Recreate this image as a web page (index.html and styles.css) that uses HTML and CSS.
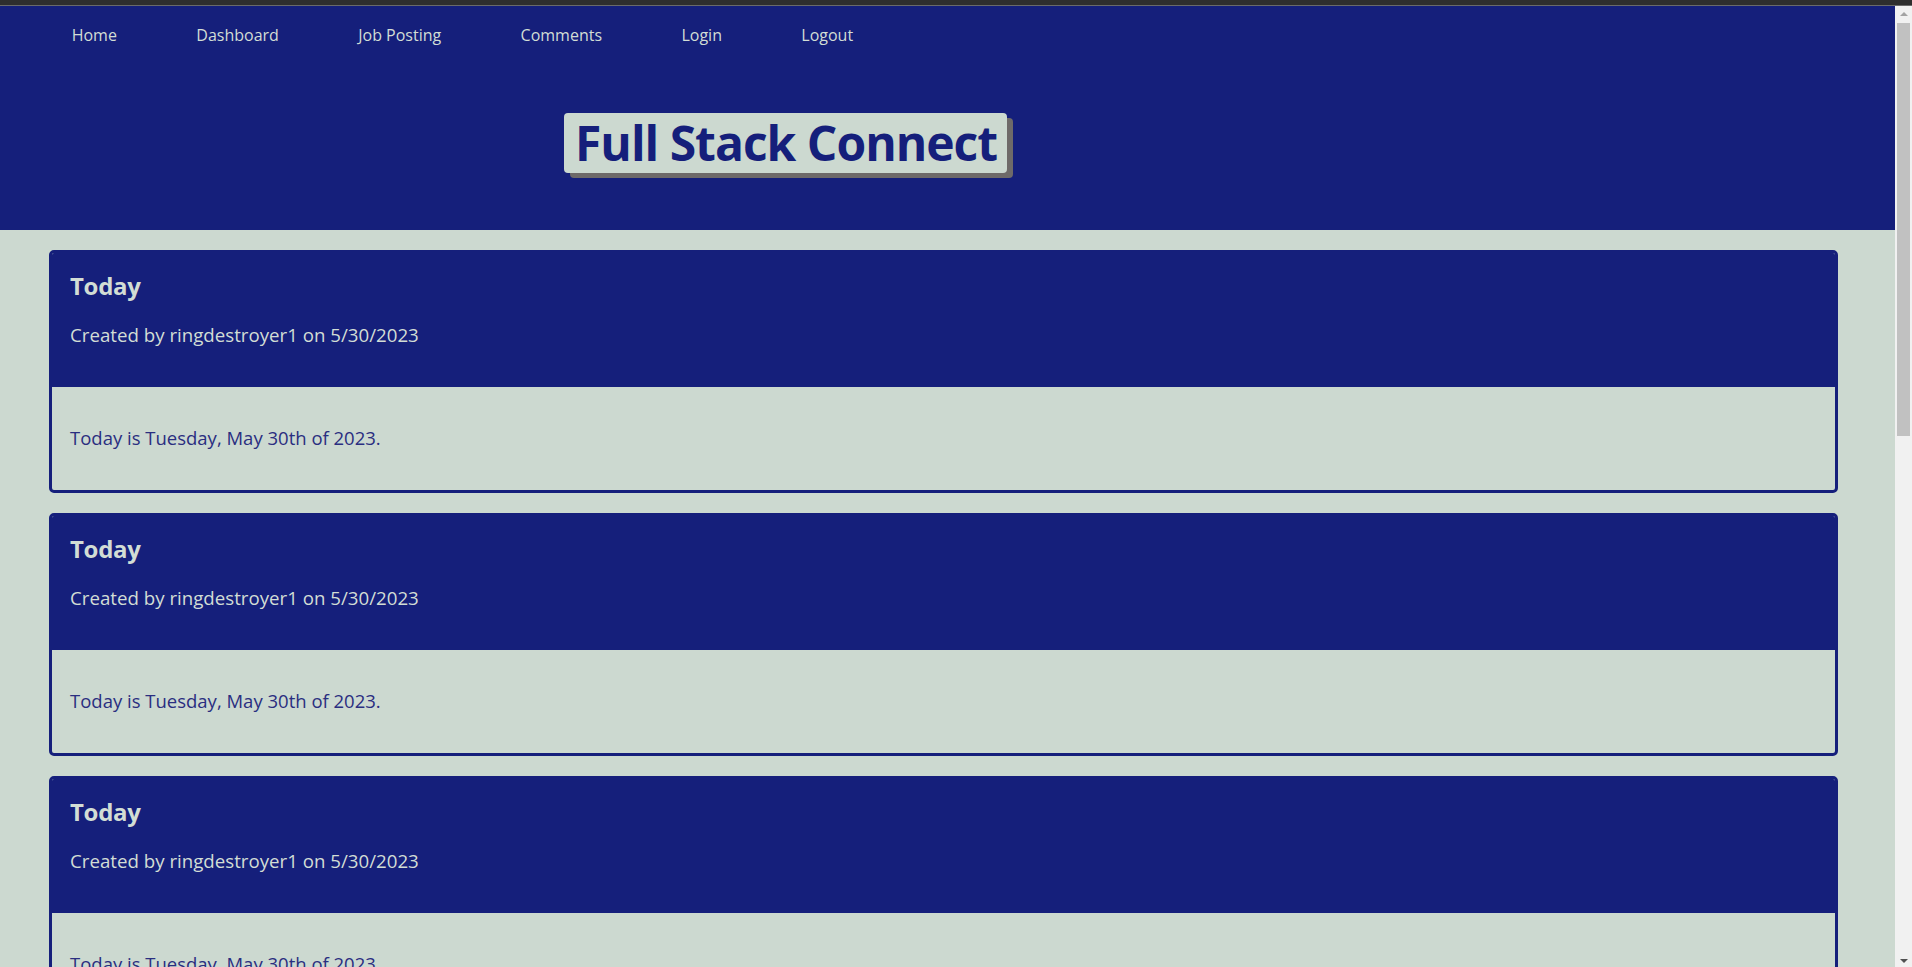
FILE: index.html
```html
<!DOCTYPE html>
<html lang="en">
<head>
<meta charset="utf-8">
<title>Full Stack Connect</title>
<link rel="stylesheet" href="styles.css">
</head>
<body>
<div class="chrome"></div>
<header class="site-header">
  <nav class="nav">
    <a class="nav-link" href="#">Home</a>
    <a class="nav-link" href="#">Dashboard</a>
    <a class="nav-link" href="#">Job Posting</a>
    <a class="nav-link" href="#">Comments</a>
    <a class="nav-link" href="#">Login</a>
    <a class="nav-link" href="#">Logout</a>
  </nav>
  <div class="brand"><h1 class="brand-title">Full Stack Connect</h1></div>
</header>
<main class="feed">
  <article class="post">
    <div class="post-head">
      <h2 class="post-title">Today</h2>
      <p class="post-meta">Created by ringdestroyer1 on 5/30/2023</p>
    </div>
    <div class="post-body"><p class="post-text">Today is Tuesday, May 30th of 2023.</p></div>
  </article>
  <article class="post">
    <div class="post-head">
      <h2 class="post-title">Today</h2>
      <p class="post-meta">Created by ringdestroyer1 on 5/30/2023</p>
    </div>
    <div class="post-body"><p class="post-text">Today is Tuesday, May 30th of 2023.</p></div>
  </article>
  <article class="post">
    <div class="post-head">
      <h2 class="post-title">Today</h2>
      <p class="post-meta">Created by ringdestroyer1 on 5/30/2023</p>
    </div>
    <div class="post-body"><p class="post-text">Today is Tuesday, May 30th of 2023.</p></div>
  </article>
</main>
<div class="scrollbar">
  <div class="scroll-arrow up"></div>
  <div class="scroll-thumb"></div>
  <div class="scroll-arrow down"></div>
</div>
</body>
</html>
```
FILE: styles.css
```css
html, body {
  margin: 0;
  padding: 0;
}
body {
  background: #ccd9d0;
  font-family: "Open Sans", "Noto Sans", sans-serif;
}
.chrome {
  height: 5px;
  background: #2e2e2e;
  border-bottom: 1px solid #6a6a6a;
}
.site-header {
  background: #151f7b;
  height: 224px;
  box-sizing: border-box;
  padding-top: 17px;
}
.nav {
  display: flex;
  padding-left: 32px;
}
.nav-link {
  color: #d2ddd5;
  text-decoration: none;
  font-size: 16px;
  line-height: 24px;
  padding: 0 39.7px;
}
.brand {
  margin-top: 66px;
  padding-left: 564px;
}
.brand-title {
  display: inline-block;
  margin: 0;
  background: #ccd9d0;
  color: #151f7b;
  font-size: 48px;
  letter-spacing: -1px;
  font-weight: 700;
  line-height: 60px;
  padding: 0 10px 0 11px;
  border-radius: 4px;
  box-shadow: 6px 5px 0 #6e6a69;
}
.feed {
  padding: 20px 74px 20px 49px;
  display: flex;
  flex-direction: column;
  gap: 20px;
}
.post {
  border: 3px solid #151f7b;
  border-radius: 5px;
  overflow: hidden;
}
.post-head {
  background: #151f7b;
  height: 134px;
  box-sizing: border-box;
  padding: 17px 18px 0;
  color: #d2ddd5;
}
.post-title {
  margin: 0;
  font-size: 24px;
  letter-spacing: -0.3px;
  line-height: 32px;
  font-weight: 700;
}
.post-meta {
  margin: 21px 0 0;
  font-size: 18.7px;
  line-height: 24px;
}
.post-body {
  padding: 39px 18px 40px;
}
.post-text {
  margin: 0;
  font-size: 18.5px;
  line-height: 24px;
  color: #2a2e80;
}
.scrollbar {
  position: fixed;
  top: 6px;
  right: 0;
  bottom: 0;
  width: 17px;
  background: #f1f1f1;
  display: flex;
  flex-direction: column;
  align-items: center;
}
.scroll-arrow {
  width: 0;
  height: 0;
  border-left: 4px solid transparent;
  border-right: 4px solid transparent;
}
.scroll-arrow.up {
  margin-top: 6px;
  border-bottom: 4px solid #a3a3a3;
}
.scroll-thumb {
  width: 13px;
  height: 413px;
  margin-top: 7px;
  background: #c1c1c1;
}
.scroll-arrow.down {
  margin-top: auto;
  margin-bottom: 4px;
  border-top: 4px solid #505050;
}
```
